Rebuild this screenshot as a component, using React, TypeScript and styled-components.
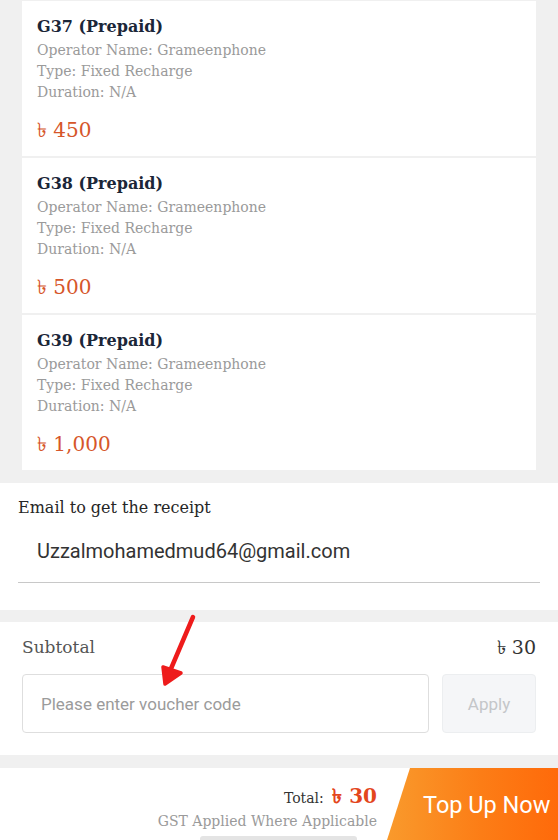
import React from 'react';
import styled, { createGlobalStyle } from 'styled-components';

const GlobalStyle = createGlobalStyle`
	html, body {
		margin: 0;
		padding: 0;
		background: #f0f0f0;
	}
	* {
		box-sizing: border-box;
	}
`;

const SERIF = `"DejaVu Serif", "Liberation Serif", serif`;
const SANS = `Roboto, "Noto Sans", sans-serif`;

interface Plan {
	code: string;
	operator: string;
	type: string;
	duration: string;
	price: string;
}

const plans: Plan[] = [
	{ code: 'G37 (Prepaid)', operator: 'Grameenphone', type: 'Fixed Recharge', duration: 'N/A', price: '450' },
	{ code: 'G38 (Prepaid)', operator: 'Grameenphone', type: 'Fixed Recharge', duration: 'N/A', price: '500' },
	{ code: 'G39 (Prepaid)', operator: 'Grameenphone', type: 'Fixed Recharge', duration: 'N/A', price: '1,000' },
];

const PlanCard = ({ code, operator, type, duration, price }: Plan) => {
	return (
		<PlanCardStyled>
			<h1>{code}</h1>
			<p>Operator Name: {operator}</p>
			<p>Type: {type}</p>
			<p>Duration: {duration}</p>
			<div className="price">৳ {price}</div>
		</PlanCardStyled>
	);
};

const App = () => {
	return (
		<>
			<GlobalStyle />
			<Page>
				<PlanList>
					{plans.map((p) => (
						<PlanCard key={p.code} {...p} />
					))}
				</PlanList>

				<EmailSection>
					<label>Email to get the receipt</label>
					<EmailInput defaultValue="Uzzalmohamedmud64@gmail.com" />
				</EmailSection>

				<VoucherSection>
					<div className="subtotal">
						<span>Subtotal</span>
						<span className="amount">৳ 30</span>
					</div>
					<div className="voucher-row">
						<VoucherInput placeholder="Please enter voucher code" />
						<ApplyButton disabled>Apply</ApplyButton>
					</div>
					{/* red annotation arrow drawn over the form */}
					<Arrow width="44" height="74" viewBox="0 0 44 74">
						<path d="M38 3 L12 64" stroke="#ee1b1b" strokeWidth="4.5" strokeLinecap="round" fill="none" />
						<path
							d="M8 53 L10 70 L26 59 Z"
							fill="#ee1b1b"
							stroke="#ee1b1b"
							strokeWidth="3.5"
							strokeLinejoin="round"
						/>
					</Arrow>
				</VoucherSection>

				<Footer>
					<div className="summary">
						<div className="total">
							Total: <b>৳ 30</b>
						</div>
						<div className="gst">GST Applied Where Applicable</div>
					</div>
					<TopUpButton>Top Up Now</TopUpButton>
					<HomeBar />
				</Footer>
			</Page>
		</>
	);
};

const Page = styled.div`
	width: 558px;
	height: 840px;
	overflow: hidden;
	background: #f0f0f0;
	display: flex;
	flex-direction: column;

	> * {
		flex-shrink: 0;
	}
`;

const PlanList = styled.div`
	display: flex;
	flex-direction: column;
	gap: 2px;
	padding: 1px 22px 0;
`;

const PlanCardStyled = styled.div`
	background: #fff;
	height: 155px;
	padding: 14px 15px 0;
	display: flex;
	flex-direction: column;

	> h1 {
		margin: 0 0 1px;
		font-family: ${SERIF};
		font-size: 16px;
		line-height: 24px;
		font-weight: 700;
		color: #1b2638;
	}

	> p {
		margin: 0;
		font-family: ${SERIF};
		font-size: 14px;
		line-height: 21px;
		color: #9a9a9a;
	}

	.price {
		margin-top: 13px;
		font-family: ${SERIF};
		font-size: 20px;
		line-height: 28px;
		color: #d6562a;
	}
`;

const EmailSection = styled.div`
	margin-top: 13px;
	background: #fff;
	height: 127px;
	padding: 13px 18px 0;
	display: flex;
	flex-direction: column;

	label {
		font-family: ${SERIF};
		font-size: 16px;
		line-height: 24px;
		color: #262626;
	}
`;

const EmailInput = styled.input`
	margin-top: 17px;
	border: none;
	outline: none;
	border-bottom: 1px solid #c8c8c8;
	padding: 0 0 17px 19px;
	font-family: ${SANS};
	font-size: 20px;
	line-height: 28px;
	color: #333;
	background: transparent;
	width: 522px;
`;

const VoucherSection = styled.div`
	position: relative;
	margin-top: 12px;
	background: #fff;
	height: 133px;
	padding: 13px 22px 0;

	.subtotal {
		display: flex;
		justify-content: space-between;
		font-family: ${SERIF};
		font-size: 17px;
		line-height: 24px;
		color: #555;

		.amount {
			font-size: 19px;
			color: #333;
		}
	}

	.voucher-row {
		margin-top: 15px;
		display: flex;
		gap: 13px;
	}
`;

const VoucherInput = styled.input`
	width: 407px;
	height: 59px;
	border: 1px solid #dedede;
	border-radius: 4px;
	outline: none;
	padding: 0 18px;
	font-family: ${SANS};
	font-size: 17px;
	color: #333;

	&::placeholder {
		color: #9b9b9b;
	}
`;

const ApplyButton = styled.button`
	width: 94px;
	height: 59px;
	border: 1px solid #eceef0;
	border-radius: 4px;
	background: #f5f6f8;
	font-family: ${SANS};
	font-size: 17px;
	color: #c4c6c9;
`;

const Arrow = styled.svg`
	position: absolute;
	left: 155px;
	top: -8px;
`;

const Footer = styled.div`
	position: relative;
	margin-top: 13px;
	height: 72px;
	background: #fff;
	display: flex;
	justify-content: flex-end;

	.summary {
		display: flex;
		flex-direction: column;
		align-items: flex-end;
		padding-top: 16px;
		font-family: ${SERIF};

		.total {
			font-size: 14px;
			line-height: 24px;
			color: #333;

			b {
				margin-left: 4px;
				font-size: 20px;
				color: #e3461c;
			}
		}

		.gst {
			font-size: 14px;
			line-height: 22px;
			color: #9a9a9a;
		}
	}
`;

const HomeBar = styled.div`
	position: absolute;
	left: 200px;
	bottom: -2px;
	width: 157px;
	height: 6px;
	border-radius: 3px;
	background: #e4e4e4;
`;

const TopUpButton = styled.button`
	margin-left: 10px;
	width: 171px;
	height: 72px;
	border: none;
	clip-path: polygon(23px 0, 100% 0, 100% 100%, 0 100%);
	background: linear-gradient(90deg, #f99a2c 0%, #fc7d16 55%, #ff6a0a 100%);
	color: #fff;
	font-family: ${SANS};
	font-size: 23.5px;
	padding: 2px 0 0 36px;
	text-align: left;
	white-space: nowrap;
`;

export default App;
